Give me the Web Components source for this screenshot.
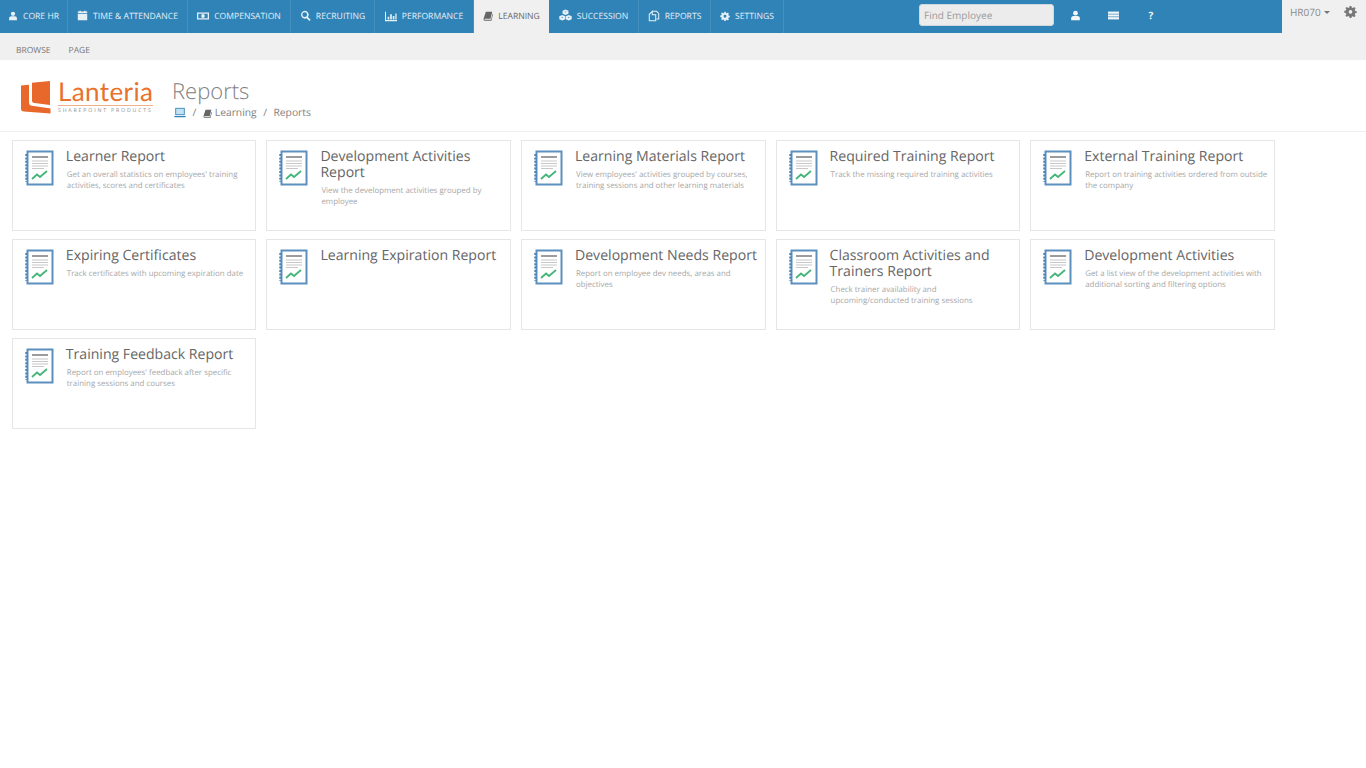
<!DOCTYPE html>
<html lang="en">
<head>
<meta charset="utf-8">
<title>Reports</title>
<style>
  html, body { margin: 0; background: #fff; }
  body {
    font-family: "Open Sans", "Liberation Sans", sans-serif;
    color: #666;
    text-rendering: geometricPrecision;
  }
</style>
</head>
<body>
<lt-topbar>
  <lt-tab icon="user" w="68" size="10">CORE HR</lt-tab>
  <lt-tab icon="calendar" w="120">TIME &amp; ATTENDANCE</lt-tab>
  <lt-tab icon="money" w="103" size="12">COMPENSATION</lt-tab>
  <lt-tab icon="search" w="84">RECRUITING</lt-tab>
  <lt-tab icon="chart" w="99" size="12">PERFORMANCE</lt-tab>
  <lt-tab icon="book" w="75" size="10" active>LEARNING</lt-tab>
  <lt-tab icon="cubes" w="90" size="13">SUCCESSION</lt-tab>
  <lt-tab icon="copy" w="72" size="12">REPORTS</lt-tab>
  <lt-tab icon="gear" w="73" size="10">SETTINGS</lt-tab>
</lt-topbar>
<lt-subbar></lt-subbar>
<lt-header></lt-header>
<lt-grid>
  <lt-card title="Learner Report">Get an overall statistics on employees' training activities, scores and certificates</lt-card>
  <lt-card title="Development Activities Report">View the development activities grouped by employee</lt-card>
  <lt-card title="Learning Materials Report">View employees' activities grouped by courses, training sessions and other learning materials</lt-card>
  <lt-card title="Required Training Report">Track the missing required training activities</lt-card>
  <lt-card title="External Training Report">Report on training activities ordered from outside the company</lt-card>
  <lt-card title="Expiring Certificates">Track certificates with upcoming expiration date</lt-card>
  <lt-card title="Learning Expiration Report"></lt-card>
  <lt-card title="Development Needs Report">Report on employee dev needs, areas and objectives</lt-card>
  <lt-card title="Classroom Activities and Trainers Report">Check trainer availability and upcoming/conducted training sessions</lt-card>
  <lt-card title="Development Activities">Get a list view of the development activities with additional sorting and filtering options</lt-card>
  <lt-card title="Training Feedback Report">Report on employees' feedback after specific training sessions and courses</lt-card>
</lt-grid>

<script>
const ICONS = {
  user: '<circle cx="7" cy="4" r="3"/><path d="M1.5 13v-2.5C1.5 8.5 3 7.500 4.500 7.500h5c1.500 0 3 1 3 3V13z"/>',
  calendar: '<path d="M1 5h12v8H1zM1 2h2V1h2v1h4V1h2v1h2v2H1z"/>',
  money: '<path fill-rule="evenodd" d="M0 3h14v8H0zM1.500 4.500v5h11v-5zM7 4.800a2.200 2.200 0 1 1 0 4.400 2.200 2.200 0 0 1 0-4.400z"/>',
  search: '<path fill-rule="evenodd" d="M6 1a5 5 0 0 1 4 8l3.500 3.500-1.500 1.500L8.500 10.500A5 5 0 1 1 6 1zm0 2a3 3 0 1 0 0 6 3 3 0 0 0 0-6z"/>',
  chart: '<path d="M0 2h1.200v9.800H14V13H0zM3 8h2v3H3zM6 5h2v6H6zM9 7h2v4H9zM12 4h1.500v7H12z"/>',
  book: '<path d="M4 1h9l-2.500 10H2.500c-.7 0-.7 1.200 0 1.200h8.700l2-8 .8.300L11.800 13.500H2.500C.8 13.500.5 11.500 1 10z"/>',
  cubes: '<path fill-rule="evenodd" d="M7 .5l3.200 1.400v3.200L7 6.500 3.800 5.100V1.900zM3.500 6.500l3.200 1.400v3.200l-3.200 1.400-3.200-1.400V7.900zM10.500 6.500l3.200 1.400v3.200l-3.200 1.400-3.200-1.400V7.900zM7 2.600L5.800 3.100 7 3.600l1.200-.5zM3.500 8.600l-1.200.5 1.200.5 1.200-.5zM10.500 8.600l-1.200.5 1.200.5 1.200-.5z"/>',
  copy: '<path fill="none" stroke="currentColor" stroke-width="1.200" d="M5 1.500h5l2.500 2.500v6.500H10M5 1.500L1.500 5v7.500H9V5.500H5z"/>',
  gear: '<path fill-rule="evenodd" d="M6 1h2l.3 1.700 1.300.5L11 2.200l1.500 1.500-1 1.400.5 1.300 1.700.3v2l-1.700.3-.5 1.300 1 1.400-1.500 1.500-1.400-1-1.300.5L8 14H6l-.3-1.700-1.300-.5-1.400 1-1.500-1.500 1-1.400-.5-1.300L.3 8.300v-2l1.700-.3.500-1.300-1-1.400L3 2.200l1.400 1 1.300-.5zM7 5.300a2 2 0 1 0 0 4 2 2 0 0 0 0-4z"/>',
  list: '<path d="M0 2h14v10H0z"/><path stroke="#3083b7" stroke-width=".8" d="M0 5.300h14M0 8.600h14"/>',
  laptop: '<rect x="2" y="1.500" width="10" height="7.500" fill="#c4e2f2" stroke="#3083b7" stroke-width="1"/><path fill="#3083b7" d="M0 10.500h14l-1 1.500H1z"/>'
};

function icon(name, size) {
  return `<svg width="${size}" height="${size}" viewBox="0 0 14 14" fill="currentColor" aria-hidden="true">${ICONS[name]}</svg>`;
}

class LtTab extends HTMLElement {
  connectedCallback() {
    const root = this.attachShadow({ mode: "open" });
    root.innerHTML = `
      <style>
        :host {
          display: flex;
          align-items: center;
          justify-content: center;
          gap: 5px;
          box-sizing: border-box;
          height: 33px;
          flex: none;
          font-size: 8.6px;
          color: #e6f0f7;
          border-right: 1px solid #4590bf;
          padding-bottom: 2px;
        }
        :host([active]) {
          background: #f0f0f0;
          color: #666;
          border-right: 0;
        }
        svg { flex: none; }
      </style>
      ${icon(this.getAttribute("icon"), this.getAttribute("size") || 11)}<span><slot></slot></span>
    `;
    this.style.width = this.getAttribute("w") + "px";
  }
}

class LtTopbar extends HTMLElement {
  connectedCallback() {
    const root = this.attachShadow({ mode: "open" });
    root.innerHTML = `
      <style>
        :host { display: flex; height: 33px; background: #f0f0f0; }
        .bar {
          display: flex;
          align-items: center;
          width: 1282px;
          height: 33px;
          flex: none;
          background: #3083b7;
        }
        .find {
          box-sizing: border-box;
          width: 135px;
          height: 22px;
          margin: 0 0 4px 135px;
          padding-left: 4px;
          border-radius: 3px;
          background: #ececec;
          border: 1px solid #cfd8de;
          color: #9a9a9a;
          font-size: 10px;
          line-height: 20px;
        }
        .tools {
          display: flex;
          align-items: center;
          margin: 0 0 3px 2px;
          color: #f2f6f9;
        }
        .tools span { width: 38px; display: flex; justify-content: center; }
        .tools b { font-size: 10px; font-weight: 700; }
        .me {
          flex: 1;
          display: flex;
          justify-content: space-between;
          padding: 5px 9px 0 8px;
          color: #8a8a8a;
          font-size: 10px;
        }
        .caret {
          display: inline-block;
          margin-left: 3px;
          vertical-align: 2px;
          border: 3px solid transparent;
          border-top-color: #777;
          border-bottom: 0;
        }
      </style>
      <div class="bar">
        <slot></slot>
        <div class="find">Find Employee</div>
        <div class="tools">
          <span>${icon("user", 11)}</span>
          <span>${icon("list", 11)}</span>
          <span><b>?</b></span>
        </div>
      </div>
      <div class="me">
        <span>HR070<i class="caret"></i></span>
        <span style="color:#777">${icon("gear", 13)}</span>
      </div>
    `;
  }
}

class LtSubbar extends HTMLElement {
  connectedCallback() {
    const root = this.attachShadow({ mode: "open" });
    root.innerHTML = `
      <style>
        :host {
          display: flex;
          align-items: center;
          gap: 18px;
          height: 27px;
          padding: 8px 0 0 16px;
          box-sizing: border-box;
          background: #f0f0f0;
          color: #777;
          font-size: 8.5px;
        }
      </style>
      <span>BROWSE</span><span>PAGE</span>
    `;
  }
}

class LtHeader extends HTMLElement {
  connectedCallback() {
    const root = this.attachShadow({ mode: "open" });
    root.innerHTML = `
      <style>
        :host {
          display: flex;
          box-sizing: border-box;
          height: 72px;
          padding: 21px 0 0 21px;
          border-bottom: 1px solid #eeeeee;
        }
        .logo { display: flex; gap: 7px; width: 151px; flex: none; }
        .word { display: flex; flex-direction: column; width: 95px; }
        .name {
          font-family: "Lato", "Open Sans", sans-serif;
          font-size: 26px;
          font-weight: 400;
          line-height: 24px;
          letter-spacing: .4px;
          color: #e8722c;
          height: 24px;
          padding-bottom: 2px;
          border-bottom: 1px solid #eeb18c;
          margin-top: -2px;
          white-space: nowrap;
        }
        .tag {
          font-size: 5.2px;
          line-height: 9px;
          letter-spacing: 1.85px;
          color: #8a8a8a;
          white-space: nowrap;
        }
        h1 {
          margin: -5px 0 0;
          font-size: 22px;
          line-height: 31px;
          font-weight: 300;
          color: #808080;
        }
        .crumbs {
          display: flex;
          align-items: center;
          height: 14px;
          margin: -1px 0 0 2px;
          font-size: 10.3px;
          color: #808080;
        }
        .crumbs i { font-style: normal; margin: 0 6.5px; }
        .crumbs svg { display: block; }
        .bk { margin-right: 3px; color: #666; }
      </style>
      <div class="logo">
        <svg width="30" height="33" viewBox="0 0 30 33" style="flex:none" aria-hidden="true">
          <path fill="#e8672a" d="M0 4.500L8 3.800V21.500C8 23.500 9 24.500 11 24.800L29.500 27.500V32.500L3 30.500C1 30.300 0 29.500 0 27.500z"/>
          <path fill="#e8672a" d="M11 1.800L29 0V24L13.500 22C11.800 21.800 11 21 11 19.500z"/>
        </svg>
        <div class="word">
          <div class="name">Lanteria</div>
          <div class="tag">SHAREPOINT PRODUCTS</div>
        </div>
      </div>
      <div class="page">
        <h1>Reports</h1>
        <div class="crumbs">
          ${icon("laptop", 12)}<i>/</i><span class="bk">${icon("book", 9)}</span>Learning<i>/</i>Reports
        </div>
      </div>
    `;
  }
}

class LtGrid extends HTMLElement {
  connectedCallback() {
    const root = this.attachShadow({ mode: "open" });
    root.innerHTML = `
      <style>
        :host {
          display: grid;
          grid-template-columns: repeat(5, 244.6px);
          grid-auto-rows: 91px;
          gap: 8px 10px;
          padding: 8px 0 0 11.8px;
        }
      </style>
      <slot></slot>
    `;
  }
}

class LtCard extends HTMLElement {
  connectedCallback() {
    const root = this.attachShadow({ mode: "open" });
    root.innerHTML = `
      <style>
        :host {
          display: flex;
          box-sizing: border-box;
          padding: 8px 3px 0 12px;
          border: 1px solid #e6e6e6;
          background: #fff;
          min-width: 0;
        }
        svg { flex: none; margin: 1px 12px 0 0; }
        h2 {
          margin: 0;
          font-size: 14.1px;
          line-height: 16px;
          font-weight: 400;
          color: #666;
        }
        p {
          margin: 5px 0 0 1px;
          font-size: 7.9px;
          line-height: 11px;
          color: #a8a8a8;
        }
      </style>
      <svg width="29" height="36" viewBox="0 0 29 36" aria-hidden="true">
        <rect x="2.500" y="1.500" width="25" height="33" fill="#fff" stroke="#5a8fbe" stroke-width="2"/>
        <path stroke="#4f86b8" stroke-width="2.500" stroke-dasharray="2 1.400" d="M1.500 4v28"/>
        <path stroke="#666" stroke-width="1.300" d="M7 7h16"/>
        <path stroke="#c8c8c8" stroke-width="1.200" d="M7 11h16M7 13.500h16M7 16h16M7 18.500h12"/>
        <path fill="none" stroke="#45b57a" stroke-width="1.800" d="M7 29l5-4.500 3 2.500 7-6"/>
      </svg>
      <div>
        <h2>${this.getAttribute("title")}</h2>
        <p><slot></slot></p>
      </div>
    `;
  }
}

customElements.define("lt-tab", LtTab);
customElements.define("lt-topbar", LtTopbar);
customElements.define("lt-subbar", LtSubbar);
customElements.define("lt-header", LtHeader);
customElements.define("lt-grid", LtGrid);
customElements.define("lt-card", LtCard);
</script>
</body>
</html>
